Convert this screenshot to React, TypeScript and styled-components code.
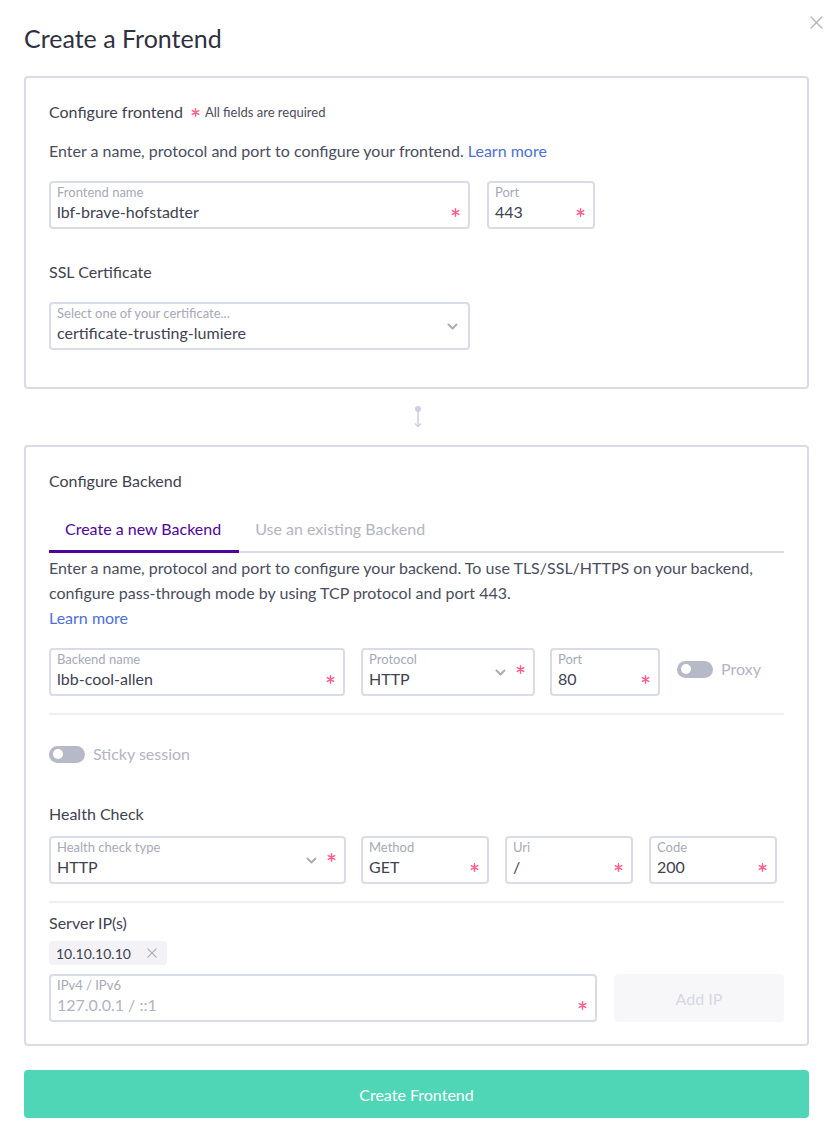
import React from "react";
import styled, { createGlobalStyle } from "styled-components";

const Global = createGlobalStyle`
  html, body { margin: 0; padding: 0; background: #ffffff; }
  body { font-family: Lato, "Open Sans", Arial, sans-serif; color: #3f4250; }
  * { box-sizing: border-box; }
`;

const Page = styled.div`
  position: relative;
  width: 832px;
  padding: 22px 23px 12px 24px;
`;

const Title = styled.h1`
  margin: 0;
  font-size: 25px;
  line-height: 32px;
  font-weight: 400;
  color: #2f3140;
`;

const Close = styled.button`
  position: absolute;
  top: 14px;
  right: 8px;
  width: 16px;
  height: 16px;
  padding: 0;
  border: none;
  background: transparent;
  display: flex;
  align-items: center;
  justify-content: center;
`;

const Card = styled.section<{ $pb?: number; $mt?: number }>`
  margin-top: ${(p) => p.$mt ?? 0}px;
  border: 2px solid #d9dce7;
  border-radius: 4px;
  padding: 24px 23px ${(p) => p.$pb ?? 24}px 23px;
  display: flex;
  flex-direction: column;
`;

const CardTitle = styled.div`
  font-size: 16px;
  line-height: 20px;
  display: flex;
  align-items: center;
  gap: 8px;
`;

const Required = styled.span`
  font-size: 13px;
  color: #4a4d5c;
  display: inline-flex;
  align-items: center;
  gap: 5px;
`;

const StarBox = styled.span<{ $pos: "top" | "value" | "inline" }>`
  display: flex;
  flex: none;
  align-self: ${(p) => (p.$pos === "inline" ? "center" : "flex-start")};
  margin-top: ${(p) => (p.$pos === "top" ? "15px" : p.$pos === "value" ? "25px" : "0")};
  margin-left: ${(p) => (p.$pos === "top" ? "8px" : "0")};
`;

const Desc = styled.p<{ $mt: number }>`
  margin: ${(p) => p.$mt}px 0 0;
  font-size: 16px;
  line-height: 25px;
  color: #4a4d5c;
`;

const Link = styled.a`
  color: #4d6fd8;
  text-decoration: none;
`;

const Row = styled.div<{ $mt: number }>`
  display: flex;
  align-items: flex-start;
  margin-top: ${(p) => p.$mt}px;
`;

const FieldBox = styled.div<{ $w: number; $mr?: number }>`
  width: ${(p) => p.$w}px;
  margin-right: ${(p) => p.$mr ?? 0}px;
  height: 48px;
  border: 2px solid #d9dce7;
  border-radius: 4px;
  padding: 0 8px 0 6px;
  display: flex;
  align-items: stretch;
  background: #fff;
`;

const FieldInner = styled.div`
  flex: 1;
  display: flex;
  flex-direction: column;
  min-width: 0;
`;

const FieldLabel = styled.span`
  font-size: 13px;
  line-height: 18px;
  color: #a6a9b6;
  white-space: nowrap;
`;

const FieldValue = styled.span<{ $placeholder?: boolean }>`
  font-size: 16px;
  line-height: 22px;
  color: ${(p) => (p.$placeholder ? "#b0b3c0" : "#3f4250")};
  white-space: nowrap;
`;

const Chevron = styled.span`
  display: flex;
  align-items: center;
  margin-right: 2px;
`;

const SubTitle = styled.div<{ $mt: number }>`
  margin-top: ${(p) => p.$mt}px;
  font-size: 16px;
  line-height: 24px;
  color: #3f4250;
`;

const Connector = styled.div`
  height: 56px;
  display: flex;
  align-items: center;
  justify-content: center;
  padding-left: 2px;
`;

const Tabs = styled.div`
  margin-top: 16px;
  display: flex;
  border-bottom: 2px solid #d9dce7;
`;

const Tab = styled.div<{ $active?: boolean }>`
  padding: 10px 18px 9px 16px;
  font-size: 16px;
  line-height: 24px;
  color: ${(p) => (p.$active ? "#4f0599" : "#b2b5c1")};
  border-bottom: 3px solid ${(p) => (p.$active ? "#4f0599" : "transparent")};
  margin-bottom: -2px;
`;

const Toggle = styled.span`
  width: 36px;
  height: 17px;
  border-radius: 9px;
  background: #b6b9c7;
  display: inline-flex;
  align-items: center;
  padding-left: 4px;
  flex: none;
  &::after {
    content: "";
    width: 10px;
    height: 10px;
    border-radius: 50%;
    background: #fff;
  }
`;

const ToggleWrap = styled.div<{ $mt?: number }>`
  display: flex;
  align-items: center;
  gap: 8px;
  margin-top: ${(p) => p.$mt ?? 0}px;
  font-size: 16px;
  line-height: 22px;
  color: #b2b5c1;
`;

const ProxyWrap = styled(ToggleWrap)`
  margin-top: 10px;
`;

const Divider = styled.hr<{ $mt: number }>`
  margin: ${(p) => p.$mt}px 0 0;
  border: none;
  height: 2px;
  background: #eeeff6;
`;

const Chip = styled.div`
  margin-top: 6px;
  align-self: flex-start;
  height: 24px;
  padding: 0 10px 0 7px;
  border-radius: 4px;
  background: #f3f3f7;
  display: flex;
  align-items: center;
  gap: 16px;
  font-size: 14px;
  color: #3f4250;
`;

const AddButton = styled.button`
  flex: 1;
  height: 48px;
  margin-left: 17px;
  border: none;
  border-radius: 4px;
  background: #f7f7fa;
  color: #d5d8e1;
  font-family: inherit;
  font-size: 16px;
`;

const Primary = styled.button`
  margin-top: 24px;
  width: 100%;
  height: 48px;
  border: none;
  border-radius: 4px;
  background: #4fd6b7;
  color: #ffffff;
  font-family: inherit;
  font-size: 16px;
`;

const ChevronIcon = () => (
  <svg width="11" height="7" viewBox="0 0 11 7" fill="none">
    <path d="M1.5 1.5 5.5 5.5l4-4" stroke="#a9acb9" strokeWidth="2" strokeLinecap="round" strokeLinejoin="round" />
  </svg>
);

const XIcon = ({ size, color }: { size: number; color: string }) => (
  <svg width={size} height={size} viewBox="0 0 12 12" fill="none">
    <path d="M1 1l10 10M11 1L1 11" stroke={color} strokeWidth="1.3" strokeLinecap="round" />
  </svg>
);

const Star = ({ pos }: { pos: "top" | "value" | "inline" }) => (
  <StarBox $pos={pos}>
    <svg width="9" height="9" viewBox="0 0 10 10" fill="none">
      <path
        d="M5 0.8v8.4M1.4 2.9l7.2 4.2M8.6 2.9 1.4 7.1"
        stroke="#ff5c8a"
        strokeWidth="1.6"
        strokeLinecap="round"
      />
    </svg>
  </StarBox>
);

type FieldProps = {
  w: number;
  mr?: number;
  label: string;
  value: string;
  select?: boolean;
  star?: boolean;
  placeholder?: boolean;
};

const Field = ({ w, mr, label, value, select, star = true, placeholder }: FieldProps) => (
  <FieldBox $w={w} $mr={mr}>
    <FieldInner>
      <FieldLabel>{label}</FieldLabel>
      <FieldValue $placeholder={placeholder}>{value}</FieldValue>
    </FieldInner>
    {select && (
      <Chevron>
        <ChevronIcon />
      </Chevron>
    )}
    {star && <Star pos={select ? "top" : "value"} />}
  </FieldBox>
);

export default function App() {
  return (
    <>
      <Global />
      <Page>
        <Title>Create a Frontend</Title>
        <Close aria-label="close">
          <XIcon size={13} color="#b4b7c4" />
        </Close>

        <Card $pb={37} $mt={22}>
          <CardTitle>
            Configure frontend
            <Required>
              <Star pos="inline" />
              All fields are required
            </Required>
          </CardTitle>
          <Desc $mt={16}>
            Enter a name, protocol and port to configure your frontend. <Link href="#">Learn more</Link>
          </Desc>
          <Row $mt={18}>
            <Field w={421} mr={17} label="Frontend name" value="lbf-brave-hofstadter" />
            <Field w={108} label="Port" value="443" />
          </Row>
          <SubTitle $mt={31}>SSL Certificate</SubTitle>
          <Row $mt={18}>
            <Field w={421} label="Select one of your certificate..." value="certificate-trusting-lumiere" select star={false} />
          </Row>
        </Card>

        <Connector>
          <svg width="10" height="24" viewBox="0 0 10 24" fill="none">
            <circle cx="5" cy="4" r="3" fill="#cdd1df" />
            <path d="M5 6v15" stroke="#cdd1df" strokeWidth="1.5" />
            <path d="M2 18.5 5 21.5l3-3" stroke="#cdd1df" strokeWidth="1.5" fill="none" />
          </svg>
        </Connector>

        <Card $pb={22}>
          <CardTitle>Configure Backend</CardTitle>
          <Tabs>
            <Tab $active>Create a new Backend</Tab>
            <Tab>Use an existing Backend</Tab>
          </Tabs>
          <Desc $mt={2}>
            Enter a name, protocol and port to configure your backend. To use TLS/SSL/HTTPS on your backend,
            configure pass-through mode by using TCP protocol and port 443.
            <br />
            <Link href="#">Learn more</Link>
          </Desc>
          <Row $mt={18}>
            <Field w={296} mr={16} label="Backend name" value="lbb-cool-allen" />
            <Field w={174} mr={15} label="Protocol" value="HTTP" select />
            <Field w={110} mr={17} label="Port" value="80" />
            <ProxyWrap>
              <Toggle />
              Proxy
            </ProxyWrap>
          </Row>
          <Divider $mt={17} />
          <ToggleWrap $mt={28}>
            <Toggle />
            Sticky session
          </ToggleWrap>
          <SubTitle $mt={37}>Health Check</SubTitle>
          <Row $mt={10}>
            <Field w={297} mr={15} label="Health check type" value="HTTP" select />
            <Field w={128} mr={16} label="Method" value="GET" />
            <Field w={128} mr={16} label="Uri" value="/" />
            <Field w={128} label="Code" value="200" />
          </Row>
          <Divider $mt={17} />
          <SubTitle $mt={8}>Server IP(s)</SubTitle>
          <Chip>
            10.10.10.10
            <XIcon size={10} color="#a9acb9" />
          </Chip>
          <Row $mt={9}>
            <Field w={548} label="IPv4 / IPv6" value="127.0.0.1 / ::1" placeholder />
            <AddButton>Add IP</AddButton>
          </Row>
        </Card>

        <Primary>Create Frontend</Primary>
      </Page>
    </>
  );
}
